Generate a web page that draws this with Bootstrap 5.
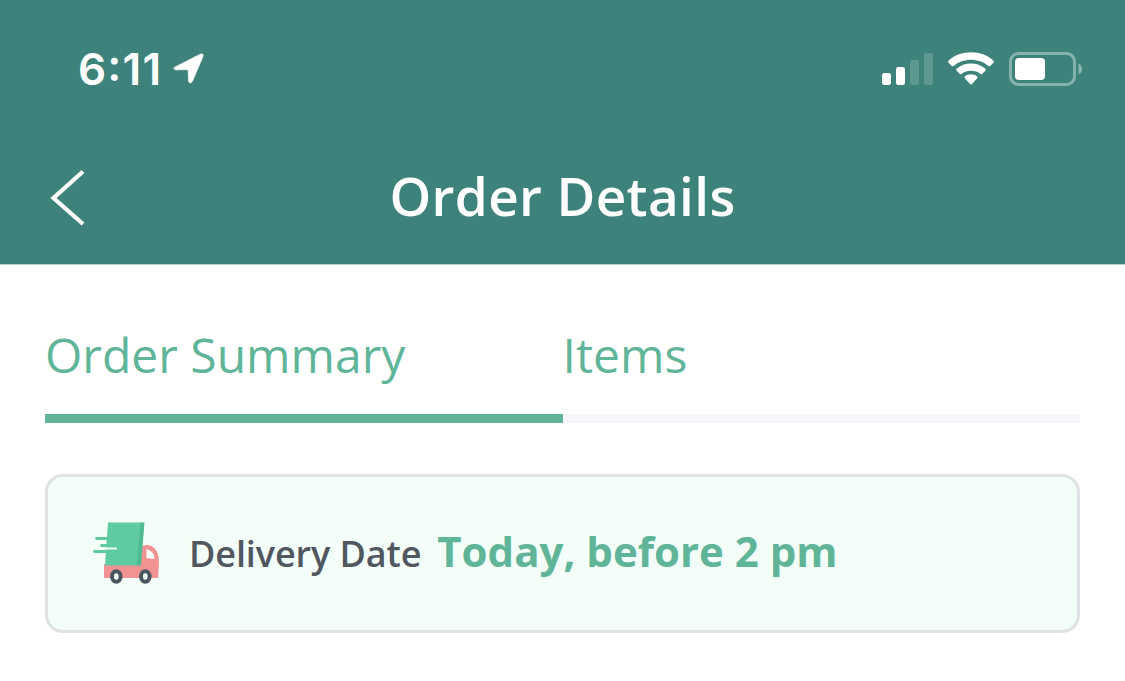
<!DOCTYPE html>
<html lang="en">
<head>
<meta charset="utf-8">
<meta name="viewport" content="width=device-width, initial-scale=1">
<title>Order Details</title>
<link href="https://cdn.jsdelivr.net/npm/bootstrap@5.3.0/dist/css/bootstrap.min.css" rel="stylesheet">
<style>
  body { font-family: "Open Sans", "Noto Sans", sans-serif; background: #fff; }
  svg { display: block; flex: none; }
  .app-header { height: 264px; background: #3d837b; box-shadow: 0 1px 0 #bcd0ce; }
  .status-bar { height: 138px; padding: 0 43px 0 78px; }
  .clock { font: 600 44px/1 "Inter", sans-serif; letter-spacing: 1.2px; }
  .clock-colon { display: inline-block; transform: translateY(-4px); }
  .title-bar { height: 118px; padding: 0 50px 4px; }
  .title-bar h1 { font-size: 53px; font-weight: 600; line-height: 1; letter-spacing: .38px; }
  .content { padding: 66px 45px 0; }
  .order-tabs .nav-link { height: 93px; padding: 0; border-radius: 0; border-bottom: 9px solid #f5f5fa; color: #60b599; font-size: 48px; line-height: 50px; text-align: left; }
  .order-tabs .nav-link.active { border-color: #60b599; }
  .delivery { margin-top: 51px; height: 159px; padding: 0 45px 5px; background: #f3fef9; border: 3px solid #dfe2e4; border-radius: 18px; }
  .delivery-label { font-size: 36px; font-weight: 600; color: #50575f; line-height: 1; margin-left: 28px; letter-spacing: -.1px; }
  .delivery-time { font-size: 42px; font-weight: 700; color: #60b599; line-height: 1; margin-left: 16px; }
</style>
</head>
<body>
<header class="app-header text-white">
  <div class="status-bar d-flex align-items-center justify-content-between">
    <div class="d-flex align-items-center">
      <span class="clock">6<span class="clock-colon">:</span>11</span>
      <svg class="ms-2" width="36" height="36" viewBox="0 0 36 36"><path d="M4.700 16.300 30.300 3.200Q33.800 2 32.900 5.500L22.300 30.500Q19.700 33.500 18.600 30.200L18.200 19.500Q18 18.700 17.200 18.600L5.500 18.800Q2.600 18 4.700 16.300Z" fill="#fff" stroke="#fff" stroke-width=".8"/></svg>
    </div>
    <svg width="201" height="36" viewBox="0 0 201 36" fill="#fff">
      <rect x="1" y="22" width="9" height="12" rx="2.300"/>
      <rect x="15" y="16" width="9" height="18" rx="2.300"/>
      <g opacity=".17"><rect x="29" y="9" width="9" height="25" rx="2.300"/><rect x="43" y="2" width="9" height="32" rx="2.300"/></g>
      <path d="M67.500 9.700C79-1.600 101-1.600 112.500 9.700Q113.500 10.700 112.500 11.700L109.100 15Q108.300 15.700 107.500 15C98 6.500 82 6.500 72.500 15Q71.700 15.700 70.900 15L67.500 11.700Q66.500 10.700 67.500 9.700Z"/>
      <path d="M75.600 17.700C83.300 10.700 96.700 10.700 104.400 17.700Q105.300 18.700 104.400 19.700L101 23Q100.300 23.700 99.500 23C94.500 18.800 85.500 18.800 80.500 23Q79.700 23.700 79 23L75.600 19.700Q74.700 18.700 75.600 17.700Z"/>
      <path d="M83.800 25.500C87 22.500 93 22.500 96.200 25.500Q97 26.300 96.200 27.200L90.700 33.200Q90 34 89.300 33.200L83.800 27.200Q83 26.300 83.800 25.500Z"/>
      <rect x="129.500" y="2.500" width="64" height="31" rx="8" fill="none" stroke="#fff" stroke-width="3" opacity=".38"/>
      <rect x="134" y="7" width="30" height="22" rx="4"/>
      <path d="M197.500 12.500Q201 14 201 18T197.500 23.500Z" opacity=".42"/>
    </svg>
  </div>
  <div class="title-bar position-relative d-flex align-items-center justify-content-center">
    <a href="#" class="position-absolute start-0 top-0 ms-5 mt-4" aria-label="Back"><svg width="40" height="70" viewBox="0 0 40 70"><path d="M35 9.500 5.500 36 35 62" fill="none" stroke="#fff" stroke-width="4.200"/></svg></a>
    <h1 class="m-0">Order Details</h1>
  </div>
</header>
<main class="content">
  <nav class="order-tabs nav nav-justified">
    <a class="nav-link w-50 active" href="#">Order Summary</a>
    <a class="nav-link w-50" href="#">Items</a>
  </nav>
  <section class="delivery d-flex align-items-center">
    <svg width="68" height="66" viewBox="0 -1 68 66">
      <path d="M11 45H44L49 28Q50 25.500 55 26Q66 28 66 44L65 59H11Z" fill="#f19392"/>
      <path d="M15 3.500H48L44 46.500H12Z" fill="#5fcba2"/>
      <path d="M47.500 3.500H51.500L48 46.500H43.500Z" fill="#4fbb91"/>
      <path d="M53.500 30Q61 32 61.500 40L53.500 39Z" fill="#f3fef9"/>
      <path d="M3.500 19.500H15M8.500 26.500H15M1.500 32.500H13" fill="none" stroke="#5fcba2" stroke-width="2.800" stroke-linecap="round"/>
      <path d="M13 29.500H23" stroke="#f3fef9" stroke-width="2.200" stroke-linecap="round"/>
      <g fill="#f3fef9" stroke="#4c5661" stroke-width="4"><ellipse cx="23.300" cy="57.500" rx="4.300" ry="5.300"/><ellipse cx="52.300" cy="57.500" rx="4.300" ry="5.300"/></g>
    </svg>
    <div class="d-flex align-items-baseline">
      <span class="delivery-label">Delivery Date</span>
      <span class="delivery-time">Today, before 2 pm</span>
    </div>
  </section>
</main>
<script src="https://cdn.jsdelivr.net/npm/bootstrap@5.3.0/dist/js/bootstrap.bundle.min.js"></script>
</body>
</html>
